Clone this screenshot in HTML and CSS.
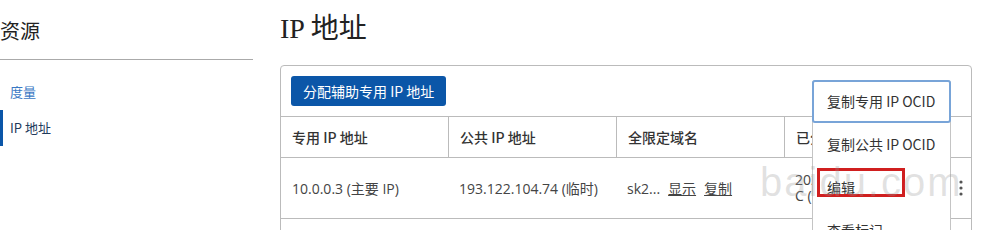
FILE: index.html
```html
<!DOCTYPE html>
<html lang="zh-CN">
<head>
<meta charset="utf-8">
<title>IP 地址</title>
<link rel="stylesheet" href="styles.css">
</head>
<body>
<div class="page">
  <aside class="sidebar">
    <h2 class="side-title">资源</h2>
    <nav class="side-nav">
      <a class="side-link">度量</a>
      <a class="side-link active">IP 地址</a>
    </nav>
  </aside>
  <main class="main">
    <h1 class="title">IP 地址</h1>
    <section class="card">
      <div class="toolbar">
        <button class="btn-primary">分配辅助专用 IP 地址</button>
      </div>
      <div class="table">
        <div class="row head">
          <div class="cell">专用 IP 地址</div>
          <div class="cell sep">公共 IP 地址</div>
          <div class="cell sep">全限定域名</div>
          <div class="cell sep clip">已分配日期</div>
          <div class="cell"></div>
        </div>
        <div class="row data">
          <div class="cell">10.0.0.3 (主要 IP)</div>
          <div class="cell">193.122.104.74 (临时)</div>
          <div class="cell">sk2... <a class="ul">显示</a> <a class="ul">复制</a></div>
          <div class="cell stack clip"><span>2021年1月5日 08:00 UT</span><span>C (协调世界时)</span></div>
          <div class="cell kebab">
            <svg width="4" height="16" viewBox="0 0 4 16"><circle cx="2" cy="2" r="1.6" fill="#555"/><circle cx="2" cy="8" r="1.6" fill="#555"/><circle cx="2" cy="14" r="1.6" fill="#555"/></svg>
          </div>
        </div>
        <div class="row data"></div>
      </div>
    </section>
  </main>
</div>
<ul class="menu">
  <li class="menu-item focus">复制专用 IP OCID</li>
  <li class="menu-item">复制公共 IP OCID</li>
  <li class="menu-item">编辑</li>
  <li class="menu-item">查看标记</li>
</ul>
<div class="mark-box"></div>
<div class="watermark">baidu.com</div>
</body>
</html>
```
FILE: styles.css
```css
html, body {
  margin: 0;
  padding: 0;
  background: #fff;
  overflow: hidden;
}
body {
  font-family: "Open Sans", "Noto Sans CJK SC", sans-serif;
  color: #333;
  width: 988px;
  height: 230px;
  position: relative;
}
.page {
  display: flex;
  gap: 27px;
}
.sidebar {
  width: 253px;
  flex: none;
}
.side-title {
  margin: 0;
  padding: 21px 0 18px 0;
  font: 400 20px/20px "Noto Sans CJK SC", sans-serif;
  color: #222;
  border-bottom: 1px solid #aaa;
}
.side-nav {
  display: flex;
  flex-direction: column;
  padding-top: 14px;
}
.side-link {
  display: block;
  height: 36px;
  line-height: 36px;
  padding-left: 10px;
  font: 400 13px/36px "Noto Sans CJK SC", sans-serif;
  color: #3b78c4;
}
.side-link.active {
  color: #1f3b5c;
  padding-left: 7px;
  border-left: 3px solid #0b56a8;
}
.main {
  flex: none;
  width: 692px;
}
.title {
  margin: 0;
  padding-top: 14px;
  font: 400 28px/30px "Liberation Serif", "Noto Sans CJK SC", serif;
  color: #222;
  margin-bottom: 21px;
}
.card {
  border: 1px solid #bbb;
  border-radius: 4px;
  height: 300px;
}
.toolbar {
  padding: 10px;
}
.btn-primary {
  display: block;
  height: 30px;
  padding: 0 12px;
  border: 0;
  border-radius: 3px;
  background: #0b56a8;
  color: #fff;
  font: 400 14px/30px "Noto Sans CJK SC", sans-serif;
}
.row {
  display: grid;
  grid-template-columns: 167px 168px 168px 1fr 22px;
  border-top: 1px solid #bbb;
}
.row.head {
  height: 40px;
}
.row.data {
  height: 60px;
}
.cell {
  box-sizing: border-box;
  padding: 0 11px;
  display: flex;
  align-items: center;
  font-size: 14px;
  white-space: nowrap;
}
.head .cell {
  font: 500 14px/20px "Noto Sans CJK SC", sans-serif;
  color: #333;
}
.cell.sep {
  border-left: 1px solid #bbb;
}
.data .cell {
  color: #444;
  font-size: 14px;
}
.clip {
  overflow: hidden;
}
.ul {
  text-decoration: underline;
  color: #444;
  margin-left: 8px;
}
.stack {
  flex-direction: column;
  align-items: flex-start;
  justify-content: center;
  line-height: 16px;
}
.kebab {
  padding: 0 0 0 2px;
  justify-content: center;
}
.menu {
  position: absolute;
  left: 812px;
  top: 80px;
  width: 139px;
  box-sizing: border-box;
  margin: 0;
  padding: 0;
  list-style: none;
  background: #fff;
  border: 1px solid #c4c4c4;
  border-radius: 3px;
}
.menu-item {
  height: 43px;
  line-height: 43px;
  padding-left: 14px;
  font: 400 14px/43px "Noto Sans CJK SC", sans-serif;
  color: #333;
  white-space: nowrap;
}
.menu-item.focus {
  margin: -1px -1px 0 -1px;
  padding-left: 13px;
  border: 2px solid #78a4d8;
  border-radius: 3px;
  height: 39px;
  line-height: 39px;
}
.mark-box {
  position: absolute;
  left: 817px;
  top: 168px;
  width: 88px;
  height: 29px;
  box-sizing: border-box;
  border: 3px solid #d01f1f;
}
.watermark {
  position: absolute;
  left: 760px;
  top: 160px;
  font: 400 40px/44px "Liberation Sans", sans-serif;
  letter-spacing: 2px;
  color: rgba(150, 150, 150, 0.28);
  pointer-events: none;
}
```
